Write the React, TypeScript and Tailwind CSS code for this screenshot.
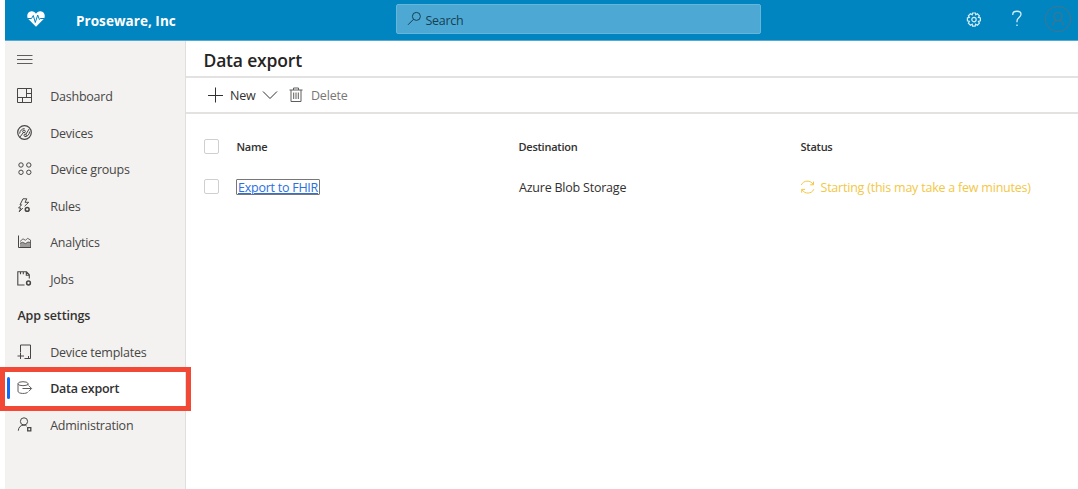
import type { ReactNode } from "react";

function Glyph({ children, className = "" }: { children: ReactNode; className?: string }) {
  return (
    <svg viewBox="0 0 16 16" fill="none" stroke="currentColor" strokeWidth="1" className={`h-4 w-4 shrink-0 ${className}`}>
      {children}
    </svg>
  );
}

const icons = {
  dashboard: <Glyph><path d="M.5 .5H14.5V14.5H.5ZM9.5 .5V9.5M.5 9.5H14.5M5.5 9.5V14.5M9.5 5.5H14.5" /></Glyph>,
  devices: <Glyph><circle cx="7.5" cy="7.5" r="6.8" strokeWidth="1.2" /><path d="M3 12L6.3 7.6M2.6 8.6C3 5.5 5 3.6 7.6 3.6M8.8 9.4L12.2 3.9M12.6 6.6C12.4 9.6 10.6 11.6 8 11.6" /><circle cx="7" cy="6.4" r="1.3" /><circle cx="8.2" cy="10.3" r="1.2" /></Glyph>,
  groups: <Glyph><circle cx="4" cy="4" r="2.2" /><circle cx="11.8" cy="4" r="2.2" /><circle cx="4" cy="11.3" r="2.2" /><circle cx="11.8" cy="11.3" r="2.2" /></Glyph>,
  rules: <Glyph><path d="M5.8 10L2.2 13.8L3.8 10H1.6L4.6 6.8H3L6 .8H9.8L8 4.3H11.7L7.6 8.2" /><circle cx="10.2" cy="11.4" r="1.9" strokeWidth="1.5" /></Glyph>,
  analytics: <Glyph><path d="M1.5 1.5V13.5H14" /><path d="M3 13V9.3L5.5 8.3L8.5 9.6L11 8L13.5 8.5V13Z" fill="currentColor" fillOpacity=".5" stroke="none" /><path d="M3 7.5L6 4.8L8.5 6.3L10.5 4.3L13.5 6V13M3 9.3L5.5 8.3L8.5 9.6L11 8L13.5 8.5" strokeOpacity=".8" /></Glyph>,
  jobs: <Glyph><path d="M7.5 14H.8V.8H9.5L12.3 3.8V7.5M9.3 .8V4.3H12.3M3.5 .8V3.3M6.3 .8V3.3" strokeWidth="1.1" /><circle cx="11.5" cy="12" r="1.9" strokeWidth="1.5" /></Glyph>,
  templates: <Glyph><path d="M3.5 8.5V1H13.5V14.5H7.5M11.5 12V14.5M3.5 9V15M.5 12H7" /></Glyph>,
  export: <Glyph><ellipse cx="6" cy="3.7" rx="5" ry="2" /><path d="M1 3.7V11.2C1 14 10 14.2 11 11.8M11 3.7V5.5M5.5 8.5H14.5M11.8 5.7L14.6 8.5L11.8 11.3" /></Glyph>,
  admin: <Glyph><circle cx="7" cy="4.4" r="3.6" /><path d="M1.3 13.7C1.5 10.3 3.5 8.1 7 8.1C8.2 8.1 9 8.5 9.7 9.1" /><path d="M10.7 10.7H13.8V13.8H10.7Z" strokeWidth="1.3" /></Glyph>,
};

type Item = { label: string; icon: ReactNode };

const mainItems: Item[] = [
  { label: "Dashboard", icon: icons.dashboard },
  { label: "Devices", icon: icons.devices },
  { label: "Device groups", icon: icons.groups },
  { label: "Rules", icon: icons.rules },
  { label: "Analytics", icon: icons.analytics },
  { label: "Jobs", icon: icons.jobs },
];

function NavItem({ label, icon }: Item) {
  return (
    <a className="flex h-[36.5px] items-center gap-[17.2px] pl-3 text-[#484644]">
      {icon}
      <span className="pt-[2px] tracking-[-0.23px]">{label}</span>
    </a>
  );
}

function Checkbox() {
  return <span className="-ml-[0.5px] block h-[15px] w-[15px] rounded-[2px] border border-[#d0cfce] bg-white" />;
}

export default function App() {
  return (
    <div className="flex h-[489px] w-[1078px] flex-col overflow-hidden bg-white pl-[5px] font-['Open_Sans','Noto_Sans',sans-serif] text-[12.5px] leading-[18px] text-[#323130]">
      <header className="flex h-[41px] shrink-0 items-center border-b border-[#56a9d3] bg-[#0085c1] text-white">
        <svg viewBox="0 0 18 16" className="ml-[22px] h-4 w-[18px] shrink-0 -translate-y-px">
          <path d="M9 15.8L1.3 8C-.8 5.5.2.5 4.5.3C6.6.2 8 1.3 9 2.8C10 1.3 11.4.2 13.5.3C17.8.5 18.8 5.5 16.7 8Z" fill="white" />
          <path d="M1 7.5H4.5L6.3 4.5L8.3 11.5L10.7 4L12.4 8.5L13.3 7.5H17" fill="none" stroke="#0085c1" strokeWidth="1" />
        </svg>
        <h1 className="ml-[31px] w-[320px] pt-px text-[13.5px] font-bold tracking-[0.05px]">Proseware, Inc</h1>
        <div className="-ml-[0.5px] flex h-[30px] w-[365px] shrink-0 -translate-y-px items-center rounded-[2px] border border-[#67b5d9] bg-[#4da9d4] pl-[10px] text-[#173f53]">
          <Glyph className="mr-[3px]"><circle cx="9.4" cy="5.4" r="4" /><path d="M6.5 8.3L1 13.8" /></Glyph>
          <span className="pt-[3px] tracking-[-0.3px]">Search</span>
        </div>
        <svg viewBox="0 0 16 16" className="ml-[205px] h-4 w-4 shrink-0" fill="none" stroke="#d6edf7" strokeWidth="1.2">
          <path d="M6.6 1h2.8l.4 1.8 1.6-1 2 2-1 1.6 2 .6v2.8l-2 .6 1 1.8-2 2-1.8-1-.4 2H6.6l-.4-2-1.8 1-2-2 1-1.8-2-.6V6l2-.6-1-1.6 2-2 1.8 1Z" />
          <circle cx="8" cy="7.6" r="2.2" />
        </svg>
        <svg viewBox="0 0 12 18" className="ml-[29.5px] h-[18px] w-3 shrink-0 -translate-y-px" fill="none" stroke="#d6edf7" strokeWidth="1.3">
          <path d="M1.8 5V4C2.2.4 10 .2 10 4.3C10 7.5 6 7.5 6 11V12.3M6 14.4V16" />
        </svg>
        <svg viewBox="0 0 28 28" className="ml-[21px] h-7 w-7 shrink-0 -translate-y-px" fill="none" stroke="#45748c" strokeWidth="1">
          <circle cx="14" cy="14" r="12.7" /><circle cx="14" cy="11.5" r="4" strokeWidth="1.2" /><path d="M8.7 20.5C9 17 11 15.5 14 15.5S19 17 19.3 20.5" strokeWidth="1.2" />
        </svg>
      </header>

      <div className="flex min-h-0 flex-1">
        <aside className="relative w-[181px] shrink-0 border-r border-[#e1dfdd] bg-[#f3f2f1]">
          <div className="flex h-[37px] items-center pl-3 text-[#605e5c]">
            <Glyph><path d="M0 3.5H15.5M0 7.5H15.5M0 11.5H15.5" /></Glyph>
          </div>
          {mainItems.map((item) => <NavItem key={item.label} {...item} />)}
          <h2 className="flex h-[36.5px] items-center pt-[2px] pl-[12.4px] font-semibold tracking-[-0.15px]">App settings</h2>
          <NavItem label="Device templates" icon={icons.templates} />
          <a className="flex h-[36.5px] items-center bg-white font-semibold">
            <span className="ml-0.5 h-[22px] w-[3px] rounded-full bg-[#1267f5]" />
            <span className="ml-[7px] text-[#605e5c]">{icons.export}</span>
            <span className="ml-[17.2px] pt-[2px] tracking-[-0.25px]">Data export</span>
          </a>
          <NavItem label="Administration" icon={icons.admin} />
          <div className="absolute top-[326px] -left-[5px] h-[44px] w-[191px] border-5 border-[#f24936]" />
        </aside>

        <main className="flex min-w-0 flex-1 flex-col">
          <div className="flex h-[37px] items-center border-b-2 border-[#e3e2e1] pl-[17.5px]">
            <h2 className="pt-[3px] text-[17.5px] leading-6 font-semibold tracking-[-0.18px] text-[#252423]">Data export</h2>
          </div>
          <div className="flex h-9 items-center border-b-2 border-[#e3e2e1] pl-[21px]">
            <Glyph><path d="M8.5 .5V15.5M1 8.5H16" /></Glyph>
            <span className="ml-[7px] w-[32px] pt-px tracking-[-0.2px]">New</span>
            <Glyph><path d="M1 4.5L8 11.5L15 4.5" /></Glyph>
            <Glyph className="ml-[10px] text-[#605e5c]"><path d="M1.5 3H14.5M5.5 3V1H10.5V3M3 3V14.5H13V3M5.7 5.5V12M8 5.5V12M10.3 5.5V12" /></Glyph>
            <span className="ml-[7px] pt-px tracking-[-0.2px] text-[#797775]">Delete</span>
          </div>
          <div className="grid grid-cols-[33px_282px_282px_1fr] grid-rows-[40px_41px] items-center pt-3 pl-[18px]">
            <Checkbox />
            <span className="-ml-[0.5px] pt-px text-[11px] font-semibold tracking-[-0.25px]">Name</span>
            <span className="-ml-[0.5px] pt-px text-[11px] font-semibold tracking-[-0.25px]">Destination</span>
            <span className="-ml-[0.5px] pt-px text-[11px] font-semibold tracking-[-0.25px]">Status</span>
            <Checkbox />
            <a className="-ml-px h-4 w-[84px] rounded-[1px] border border-[#777] pl-px leading-[16px] whitespace-nowrap tracking-[-0.25px] text-[#2c70dd] underline">Export to FHIR</a>
            <span className="pt-[3px] tracking-[-0.22px]">Azure Blob Storage</span>
            <div className="-ml-px flex items-center gap-[4.5px] text-[#f3c746]">
              <Glyph className="translate-y-[0.5px]"><path d="M1.3 5.5C3.5 .5 10.5 .3 13.2 5M13.5 2V5.3H10.2M13.9 9.7C11.7 14.7 4.7 14.9 2 10.2M1.7 13.2V9.9H5" /></Glyph>
              <span className="pt-[3px] tracking-[-0.22px]">Starting (this may take a few minutes)</span>
            </div>
          </div>
        </main>
      </div>
    </div>
  );
}
